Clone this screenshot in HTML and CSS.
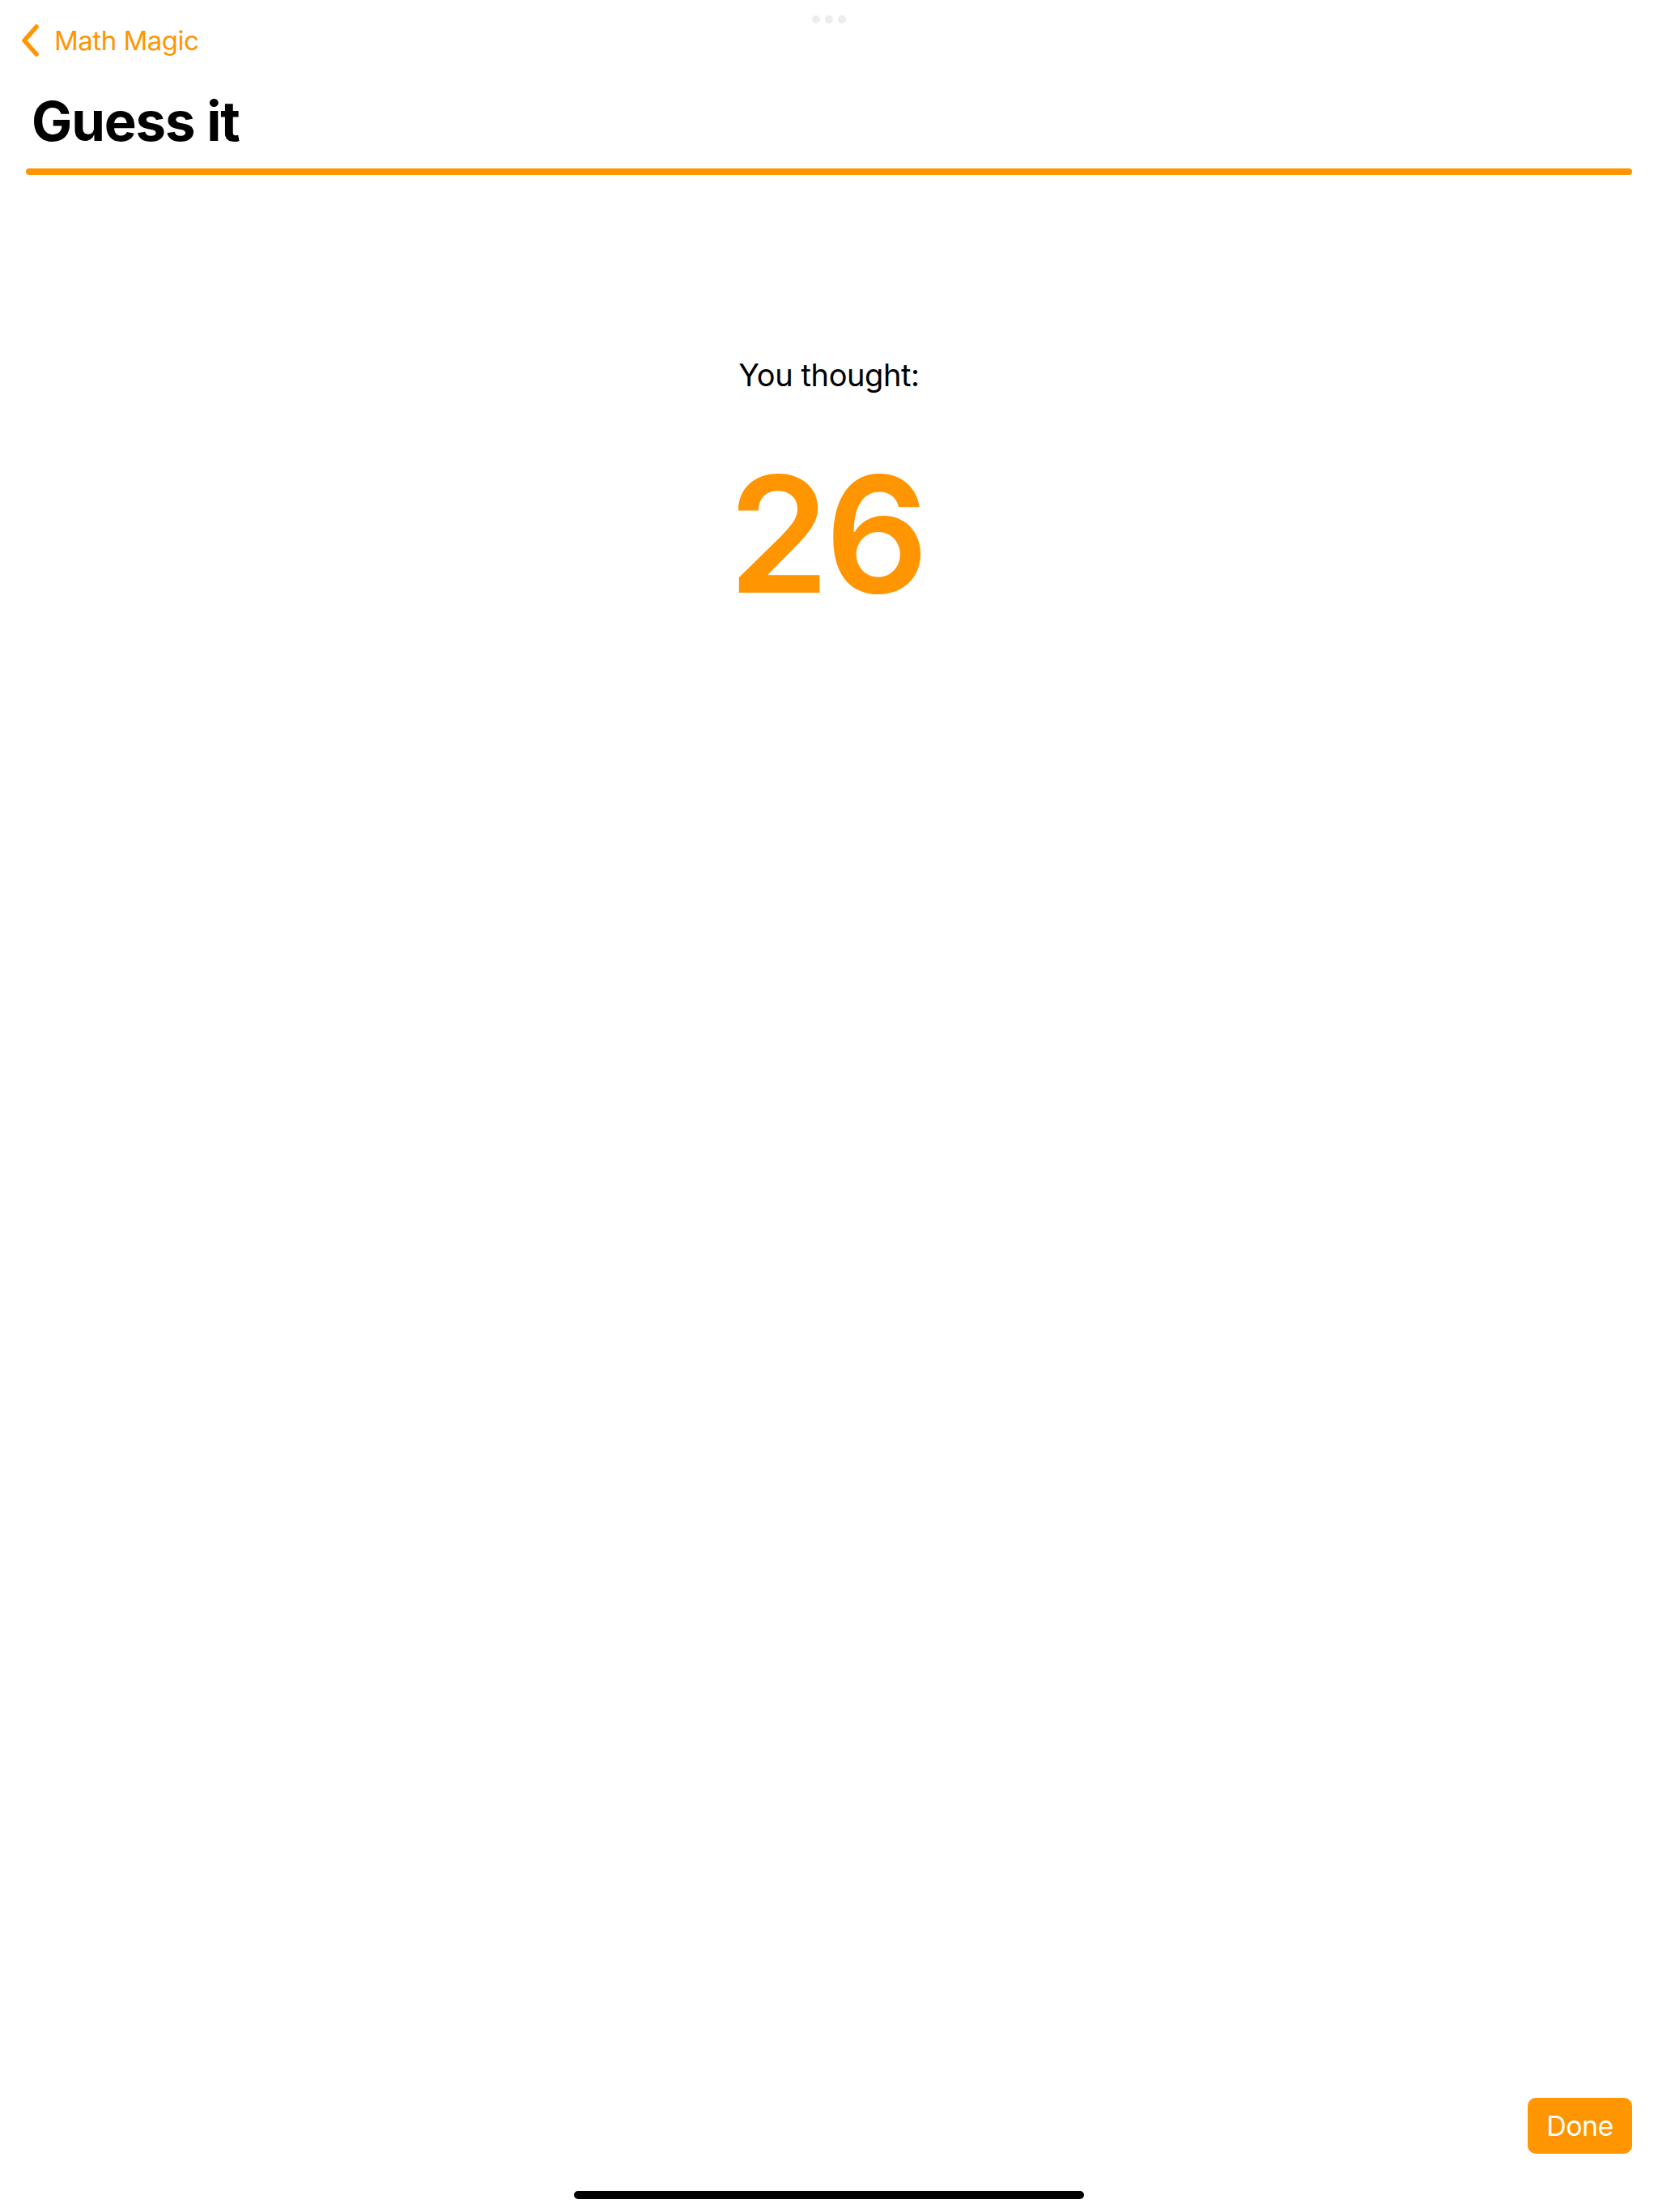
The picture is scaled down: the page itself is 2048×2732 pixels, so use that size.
FILE: index.html
```html
<!DOCTYPE html>
<html lang="en">
<head>
<meta charset="utf-8">
<title>Guess it</title>
<link rel="stylesheet" href="styles.css">
</head>
<body>
<div class="screen">
  <div class="grabber"><span></span><span></span><span></span></div>
  <header class="nav">
    <a class="back" href="#">
      <svg class="chevron" width="24" height="40" viewBox="0 0 24 40" aria-hidden="true">
        <polyline points="19,3 4,20 19,37" fill="none" stroke="#FF9500" stroke-width="5.5" stroke-linecap="round" stroke-linejoin="round"/>
      </svg>
      <span class="back-label">Math Magic</span>
    </a>
    <h1 class="title">Guess it</h1>
    <div class="rule"></div>
  </header>
  <main class="content">
    <p class="prompt">You thought:</p>
    <p class="number">26</p>
  </main>
  <footer class="footer">
    <div class="actions">
      <button class="done" type="button">Done</button>
    </div>
    <div class="home-indicator"></div>
  </footer>
</div>
</body>
</html>
```

FILE: styles.css
```css
* { box-sizing: border-box; }
html, body { margin: 0; padding: 0; background: #ffffff; }
body {
  font-family: Inter, "Noto Sans", "Liberation Sans", sans-serif;
  color: #000;
}
.screen {
  position: relative;
  width: 2048px;
  height: 2732px;
  display: flex;
  flex-direction: column;
}
.grabber {
  position: absolute;
  top: 19px;
  left: 1003px;
  display: flex;
  gap: 6px;
}
.grabber span {
  width: 10px;
  height: 10px;
  border-radius: 50%;
  background: #ededed;
}
.nav {
  padding-top: 30px;
}
.back {
  display: flex;
  align-items: center;
  height: 40px;
  padding-left: 26px;
  text-decoration: none;
  color: #FF9500;
}
.chevron { display: block; }
.back-label {
  margin-left: 17px;
  font-size: 33px;
  line-height: 40px;
  font-weight: 400;
  letter-spacing: -0.5px;
}
.title {
  margin: 38px 0 0 0;
  padding-left: 39px;
  font-size: 67px;
  line-height: 84px;
  font-weight: 700;
  letter-spacing: -1.1px;
}
.rule {
  margin: 16px 32px 0 32px;
  height: 8px;
  border-radius: 4px;
  background: #FF9500;
}
.content {
  flex: 1;
  display: flex;
  flex-direction: column;
  align-items: center;
  padding-top: 224px;
}
.prompt {
  margin: 0;
  font-size: 38px;
  line-height: 46px;
  font-weight: 400;
  letter-spacing: -0.4px;
}
.number {
  margin: 53px 0 0 0;
  padding-right: 6px;
  font-size: 200px;
  line-height: 240px;
  font-weight: 600;
  color: #FF9500;
  letter-spacing: -5px;
}
.footer {
  display: flex;
  flex-direction: column;
  align-items: center;
  padding-bottom: 16px;
}
.actions {
  align-self: stretch;
  display: flex;
  justify-content: flex-end;
  padding-right: 32px;
}
.done {
  width: 129px;
  height: 69px;
  border: none;
  border-radius: 10px;
  background: #FF9500;
  color: #ffffff;
  font-family: inherit;
  font-size: 34px;
  font-weight: 400;
  letter-spacing: -0.6px;
  padding: 0;
}
.home-indicator {
  margin-top: 46px;
  width: 630px;
  height: 10px;
  border-radius: 5px;
  background: #000;
}
```
